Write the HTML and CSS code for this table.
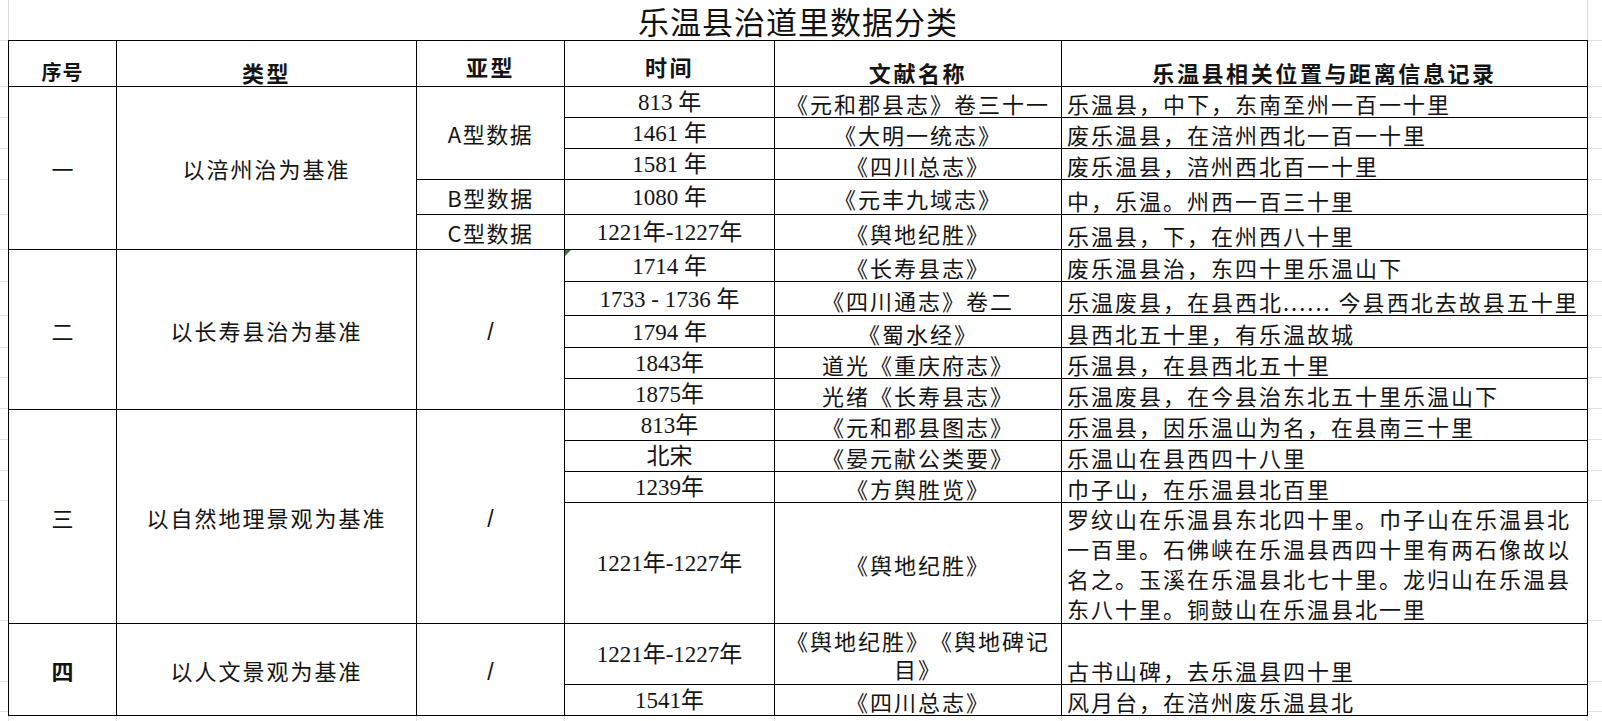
FILE: index.html
```html
<!DOCTYPE html>
<html lang="zh-CN">
<head>
<meta charset="utf-8">
<title>乐温县治道里数据分类</title>
<link rel="stylesheet" href="styles.css">
</head>
<body>
<div class="sheet">
  <div class="gutter left">
    <div class="g h41"></div><div class="g h46"></div>
    <div class="g h31"></div><div class="g h31"></div><div class="g h31"></div><div class="g h35"></div><div class="g h35"></div>
    <div class="g h32"></div><div class="g h34"></div><div class="g h32"></div><div class="g h30"></div><div class="g h31"></div>
    <div class="g h31"></div><div class="g h31"></div><div class="g h30"></div><div class="g h120"></div>
    <div class="g h61"></div><div class="g h30"></div>
  </div>
  <div class="main">
    <div class="title">乐温县治道里数据分类</div>
    <table class="grid">
      <colgroup>
        <col class="c1"><col class="c2"><col class="c3"><col class="c4"><col class="c5"><col class="c6">
      </colgroup>
      <tbody>
        <tr class="h46">
          <td class="hd hd-sans">序号</td>
          <td class="hd">类型</td>
          <td class="hd hd-mid">亚型</td>
          <td class="hd hd-mid">时间</td>
          <td class="hd">文献名称</td>
          <td class="hd">乐温县相关位置与距离信息记录</td>
        </tr>
        <tr class="h31">
          <td class="no" rowspan="5">一</td>
          <td class="cat" rowspan="5">以涪州治为基准</td>
          <td class="sub" rowspan="3">A型数据</td>
          <td class="yr">813 年</td>
          <td class="src">《元和郡县志》卷三十一</td>
          <td class="rec">乐温县，中下，东南至州一百一十里</td>
        </tr>
        <tr class="h31">
          <td class="yr">1461 年</td>
          <td class="src">《大明一统志》</td>
          <td class="rec">废乐温县，在涪州西北一百一十里</td>
        </tr>
        <tr class="h31">
          <td class="yr">1581 年</td>
          <td class="src">《四川总志》</td>
          <td class="rec">废乐温县，涪州西北百一十里</td>
        </tr>
        <tr class="h35">
          <td class="sub">B型数据</td>
          <td class="yr">1080 年</td>
          <td class="src">《元丰九域志》</td>
          <td class="rec">中，乐温。州西一百三十里</td>
        </tr>
        <tr class="h35">
          <td class="sub">C型数据</td>
          <td class="yr">1221年-1227年</td>
          <td class="src">《舆地纪胜》</td>
          <td class="rec">乐温县，下，在州西八十里</td>
        </tr>
        <tr class="h32">
          <td class="no" rowspan="5">二</td>
          <td class="cat" rowspan="5">以长寿县治为基准</td>
          <td class="slash" rowspan="5">/</td>
          <td class="yr flagged"><span class="flag"></span>1714 年</td>
          <td class="src">《长寿县志》</td>
          <td class="rec">废乐温县治，东四十里乐温山下</td>
        </tr>
        <tr class="h34">
          <td class="yr">1733 - 1736 年</td>
          <td class="src">《四川通志》卷二</td>
          <td class="rec">乐温废县，在县西北...... 今县西北去故县五十里</td>
        </tr>
        <tr class="h32">
          <td class="yr">1794 年</td>
          <td class="src">《蜀水经》</td>
          <td class="rec">县西北五十里，有乐温故城</td>
        </tr>
        <tr class="h30">
          <td class="yr">1843年</td>
          <td class="src">道光《重庆府志》</td>
          <td class="rec">乐温县，在县西北五十里</td>
        </tr>
        <tr class="h31">
          <td class="yr">1875年</td>
          <td class="src">光绪《长寿县志》</td>
          <td class="rec">乐温废县，在今县治东北五十里乐温山下</td>
        </tr>
        <tr class="h31">
          <td class="no" rowspan="4">三</td>
          <td class="cat" rowspan="4">以自然地理景观为基准</td>
          <td class="slash" rowspan="4">/</td>
          <td class="yr">813年</td>
          <td class="src">《元和郡县图志》</td>
          <td class="rec">乐温县，因乐温山为名，在县南三十里</td>
        </tr>
        <tr class="h31">
          <td class="yr">北宋</td>
          <td class="src">《晏元献公类要》</td>
          <td class="rec">乐温山在县西四十八里</td>
        </tr>
        <tr class="h30">
          <td class="yr">1239年</td>
          <td class="src">《方舆胜览》</td>
          <td class="rec">巾子山，在乐温县北百里</td>
        </tr>
        <tr class="h120">
          <td class="yr">1221年-1227年</td>
          <td class="src">《舆地纪胜》</td>
          <td class="rec rec-long">罗纹山在乐温县东北四十里。巾子山在乐温县北一百里。石佛峡在乐温县西四十里有两石像故以名之。玉溪在乐温县北七十里。龙归山在乐温县东八十里。铜鼓山在乐温县北一里</td>
        </tr>
        <tr class="h61">
          <td class="no no-bold" rowspan="2">四</td>
          <td class="cat" rowspan="2">以人文景观为基准</td>
          <td class="slash" rowspan="2">/</td>
          <td class="yr">1221年-1227年</td>
          <td class="src src-wrap">《舆地纪胜》《舆地碑记目》</td>
          <td class="rec">古书山碑，去乐温县四十里</td>
        </tr>
        <tr class="h30">
          <td class="yr">1541年</td>
          <td class="src">《四川总志》</td>
          <td class="rec">风月台，在涪州废乐温县北</td>
        </tr>
      </tbody>
    </table>
    <div class="tail">
      <div class="t1"></div><div class="t2"></div><div class="t3"></div><div class="t4"></div><div class="t5"></div><div class="t6"></div>
    </div>
  </div>
  <div class="gutter right">
    <div class="g h41"></div><div class="g h46"></div>
    <div class="g h31"></div><div class="g h31"></div><div class="g h31"></div><div class="g h35"></div><div class="g h35"></div>
    <div class="g h32"></div><div class="g h34"></div><div class="g h32"></div><div class="g h30"></div><div class="g h31"></div>
    <div class="g h31"></div><div class="g h31"></div><div class="g h30"></div><div class="g h120"></div>
    <div class="g h61"></div><div class="g h30"></div>
  </div>
</div>
</body>
</html>
```

FILE: styles.css
```css
html, body {
  margin: 0;
  padding: 0;
  background: #ffffff;
}

body {
  font-family: "Noto Sans CJK SC", "Noto Sans", sans-serif;
  color: #141414;
  text-spacing-trim: space-all;
  width: 1602px;
  height: 721px;
  overflow: hidden;
}

.sheet {
  display: flex;
  align-items: flex-start;
  width: 1602px;
}

.gutter {
  display: flex;
  flex-direction: column;
  width: 8px;
  flex: none;
}

.gutter.right {
  width: 14px;
}

.g {
  box-sizing: border-box;
  border-bottom: 1px solid #e1e1e1;
}

.h41 { height: 41px; }
.h46 { height: 46px; }
.h31 { height: 31px; }
.h35 { height: 35px; }
.h32 { height: 32px; }
.h34 { height: 34px; }
.h30 { height: 30px; }
.h120 { height: 120px; }
.h61 { height: 61px; }

.main {
  width: 1580px;
  flex: none;
}

.title {
  box-sizing: border-box;
  height: 40px;
  border-left: 1px solid #dcdcdc;
  border-right: 1px solid #dcdcdc;
  text-align: center;
  font-size: 31px;
  line-height: 42px;
  letter-spacing: 1px;
  color: #111;
  white-space: nowrap;
}

.grid {
  border-collapse: separate;
  border-spacing: 0;
  table-layout: fixed;
  width: 1580px;
  border-top: 1px solid #000;
  border-left: 1px solid #000;
}

.c1 { width: 108px; }
.c2 { width: 300px; }
.c3 { width: 148px; }
.c4 { width: 210px; }
.c5 { width: 287px; }
.c6 { width: 526px; }

.grid td {
  box-sizing: border-box;
  border-right: 1px solid #000;
  border-bottom: 1px solid #000;
  padding: 0;
  text-align: center;
  vertical-align: middle;
  font-size: 22px;
  line-height: 28px;
  letter-spacing: 2px;
  white-space: nowrap;
}

.grid td.hd {
  font-weight: 700;
  vertical-align: bottom;
  padding-bottom: 1px;
  letter-spacing: 2.6px;
  line-height: 26px;
}

.grid td.hd-mid {
  vertical-align: top;
  padding-top: 12px;
  padding-bottom: 0;
}

.grid td.hd-sans {
  font-size: 20px;
  letter-spacing: 1px;
}

.grid td.no {
  font-size: 22px;
  letter-spacing: 0;
}

.grid td.no-bold {
  font-weight: 700;
}

.grid td.sub {
  letter-spacing: 1.5px;
}

.grid td.slash {
  font-family: "Liberation Sans", sans-serif;
  font-size: 23px;
  letter-spacing: 0;
  padding-top: 4px;
}

.grid td.yr {
  font-family: "Liberation Serif", "Noto Sans CJK SC", serif;
  font-size: 23px;
  letter-spacing: 0;
  padding-top: 2px;
}

.grid td.flagged {
  position: relative;
}

.flag {
  position: absolute;
  top: 0;
  left: 0;
  width: 0;
  height: 0;
  border-top: 6px solid #2e7d32;
  border-right: 6px solid transparent;
}

.grid td.src {
  padding-top: 2px;
}

.grid td.src-wrap {
  white-space: normal;
  line-height: 28px;
  padding: 0 1px;
}

.grid td.rec {
  text-align: left;
  vertical-align: bottom;
  padding-left: 5px;
  padding-bottom: 0;
}

.grid td.rec-long {
  white-space: normal;
  line-height: 30px;
  vertical-align: bottom;
}

.tail {
  display: flex;
  height: 10px;
  box-sizing: border-box;
  border-left: 1px solid #e1e1e1;
}

.tail div {
  box-sizing: border-box;
  border-right: 1px solid #e1e1e1;
  flex: none;
}

.t1 { width: 108px; }
.t2 { width: 300px; }
.t3 { width: 148px; }
.t4 { width: 210px; }
.t5 { width: 287px; }
.t6 { width: 526px; }
```
